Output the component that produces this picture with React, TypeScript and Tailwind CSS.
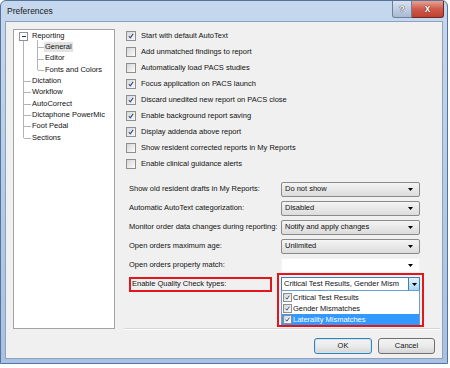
import React from 'react';

const checks: [string, boolean][] = [
  ['Start with default AutoText', true],
  ['Add unmatched findings to report', false],
  ['Automatically load PACS studies', false],
  ['Focus application on PACS launch', true],
  ['Discard unedited new report on PACS close', true],
  ['Enable background report saving', true],
  ['Display addenda above report', true],
  ['Show resident corrected reports in My Reports', false],
  ['Enable clinical guidance alerts', false],
];

const combos: [string, string][] = [
  ['Show old resident drafts in My Reports:', 'Do not show'],
  ['Automatic AutoText categorization:', 'Disabled'],
  ['Monitor order data changes during reporting:', 'Notify and apply changes'],
  ['Open orders maximum age:', 'Unlimited'],
];

const treeItems: { label: string; depth: number; selected?: boolean }[] = [
  { label: 'Reporting', depth: 0 },
  { label: 'General', depth: 1, selected: true },
  { label: 'Editor', depth: 1 },
  { label: 'Fonts and Colors', depth: 1 },
  { label: 'Dictation', depth: 0 },
  { label: 'Workflow', depth: 0 },
  { label: 'AutoCorrect', depth: 0 },
  { label: 'Dictaphone PowerMic', depth: 0 },
  { label: 'Foot Pedal', depth: 0 },
  { label: 'Sections', depth: 0 },
];

const CheckBox = ({ checked, small }: { checked: boolean; small?: boolean }) => (
  <span
    className={`relative flex shrink-0 items-center justify-center border border-[#8e8f8f] bg-gradient-to-br from-[#d6d6d6] to-[#fbfbfb] ${
      small ? 'w-[9px] h-[9px]' : 'w-[10px] h-[10px]'
    }`}
  >
    {checked && (
      <svg viewBox="0 0 10 10" className="w-full h-full">
        <path d="M2.3 5.2 L4.2 7.3 L7.6 2.4" fill="none" stroke="#3a4f86" strokeWidth="1.4" />
      </svg>
    )}
  </span>
);

const Arrow = () => (
  <svg viewBox="0 0 5 3" className="w-[5px] h-[3px]">
    <path d="M0 0 H5 L2.5 3 Z" fill="#000" />
  </svg>
);

const Combo = ({ value }: { value: string }) => (
  <div className="w-[139px] h-[15px] flex items-center justify-between pl-[3px] pr-[6px] rounded-[2px] border border-[#8a8a8a] bg-gradient-to-b from-[#f4f4f4] to-[#dcdcdc]">
    <span>{value}</span>
    <Arrow />
  </div>
);

const TreeLines = () => (
  <svg className="absolute left-0 top-0" width="102" height="140" shapeRendering="crispEdges">
    <g stroke="#b4b4b4" strokeWidth="1">
      <line x1="9.5" y1="11" x2="9.5" y2="108" />
      <line x1="23.5" y1="10" x2="23.5" y2="40" />
      {[17.5, 29, 40].map((y) => (
        <line key={y} x1="24" y1={y} x2="30" y2={y} />
      ))}
      {[51, 62.5, 74, 85, 96.5, 108].map((y) => (
        <line key={y} x1="10" y1={y} x2="17" y2={y} />
      ))}
    </g>
    <rect x="5.5" y="2.5" width="8" height="8" fill="#fff" stroke="#919191" />
    <line x1="7.5" y1="6.5" x2="11.5" y2="6.5" stroke="#1e395b" />
  </svg>
);

export default function App() {
  return (
    <div className="w-[450px] h-[368px] bg-white font-['Liberation_Sans',Arial,sans-serif] text-[7.5px] text-[#111] leading-none">
      <div className="relative w-[448px] h-[364px] flex flex-col rounded-t-[6px] border border-[#56739c] bg-gradient-to-b from-[#c6d8ee] via-[#b6cbe6] to-[#a9c1e2]">
        {/* Title bar */}
        <div className="h-[20px] flex items-center pl-[6px] pt-[1px] text-[8.5px] text-[#1a1a1a]">Preferences</div>
        <div className="absolute top-0 right-[3px] flex">
          <div className="w-[20px] h-[17px] flex items-center justify-center rounded-bl-[3px] border border-t-0 border-[#6c7f9c] bg-gradient-to-b from-[#d9e3f0] to-[#a8bad3] text-[9px] font-bold text-white [text-shadow:0_0_1px_#333,0_0_1px_#333]">
            ?
          </div>
          <div className="w-[32px] h-[17px] flex items-center justify-center rounded-br-[3px] border border-l-0 border-t-0 border-[#6b2a22] bg-gradient-to-b from-[#e5a294] via-[#cf5a4a] to-[#c1412f] text-[10px] font-bold text-white [text-shadow:0_0_1px_#4a1a12,0_0_1px_#4a1a12]">
            x
          </div>
        </div>

        {/* Client area */}
        <div className="mx-[4px] mb-[4px] flex-1 flex flex-col border border-[#8ea2bd] bg-[#f0f0f0]">
          <div className="flex pl-[7px] pt-[6px] pr-[2px]">
            {/* Tree */}
            <div className="relative mt-[1px] w-[102px] h-[300px] border border-[#a3a3a3] bg-white">
              <TreeLines />
              <div className="relative flex flex-col">
                {treeItems.map((it) => (
                  <div
                    key={it.label}
                    className={`h-[11.3px] flex items-center ${it.depth === 1 ? 'pl-[30px]' : 'pl-[17px]'}`}
                  >
                    <span className={`px-[1px] py-[1px] ${it.selected ? 'bg-[#e3e3e3]' : ''}`}>{it.label}</span>
                  </div>
                ))}
              </div>
            </div>

            {/* Right column */}
            <div className="ml-[11px] flex-1 h-[302px] flex flex-col">
              {checks.map(([label, checked]) => (
                <div key={label} className="h-[16px] flex items-center gap-[5px]">
                  <CheckBox checked={checked} />
                  <span>{label}</span>
                </div>
              ))}

              <div className="mt-[7.5px] flex flex-col">
                {combos.map(([label, value]) => (
                  <div key={label} className="h-[19px] flex items-center">
                    <span className="w-[155px] pl-[3px]">{label}</span>
                    <Combo value={value} />
                  </div>
                ))}
                <div className="h-[19px] flex items-center">
                  <span className="w-[155px] pl-[3px]">Open orders property match:</span>
                  <div className="w-[139px] h-[15px] flex items-center justify-end pr-[6px] border border-[#f4f4f4] bg-white">
                    <Arrow />
                  </div>
                </div>
                <div className="h-[19px] flex items-center">
                  <div className="w-[155px] pl-[3px] pr-[9px]">
                    <div className="h-[15px] flex items-center pl-[1px] border-2 border-[#e5161b]">
                      Enable Quality Check types:
                    </div>
                  </div>
                  <div className="relative">
                    <div className="w-[139px] h-[14px] flex items-center border border-[#3c7fb1] bg-white">
                      <span className="flex-1 pl-[2px] whitespace-nowrap overflow-hidden">
                        Critical Test Results, Gender Mism
                      </span>
                      <span className="w-[11px] h-full flex items-center justify-center border-l border-[#3c7fb1] bg-gradient-to-b from-[#e3f4fc] to-[#a9d8f2]">
                        <Arrow />
                      </span>
                    </div>
                    {/* Popup list */}
                    <div className="absolute left-0 top-[13px] w-[139px] flex flex-col border border-[#6a9bd1] bg-white pt-[1px] pb-[1px] z-10">
                      {[
                        ['Critical Test Results', false],
                        ['Gender Mismatches', false],
                        ['Laterality Mismatches', true],
                      ].map(([label, hl]) => (
                        <div
                          key={label as string}
                          className={`h-[11px] flex items-center gap-[1px] pl-[1px] ${hl ? 'bg-[#3399ff] text-white' : ''}`}
                        >
                          <CheckBox checked small />
                          <span>{label}</span>
                        </div>
                      ))}
                    </div>
                    {/* Annotation box */}
                    <div className="absolute -left-[4px] -top-[4px] w-[147px] h-[54px] border-2 border-[#e5161b] z-20 pointer-events-none" />
                  </div>
                </div>
              </div>

              <div className="mt-auto -ml-[2px] h-[2px] border-t border-[#d5d5d5] border-b border-b-white" />
            </div>
          </div>

          {/* Buttons */}
          <div className="mt-[8px] flex justify-end gap-[6px] pr-[7px]">
            <div className="w-[58px] h-[16px] flex items-center justify-center rounded-[3px] border border-[#3c7fb1] bg-gradient-to-b from-[#f2f2f2] via-[#ebebeb] to-[#d5d5d5] shadow-[inset_0_0_0_1px_#c5e6f7]">
              OK
            </div>
            <div className="w-[57px] h-[16px] flex items-center justify-center rounded-[3px] border border-[#707070] bg-gradient-to-b from-[#f2f2f2] via-[#ebebeb] to-[#d5d5d5]">
              Cancel
            </div>
          </div>
        </div>
      </div>
    </div>
  );
}
